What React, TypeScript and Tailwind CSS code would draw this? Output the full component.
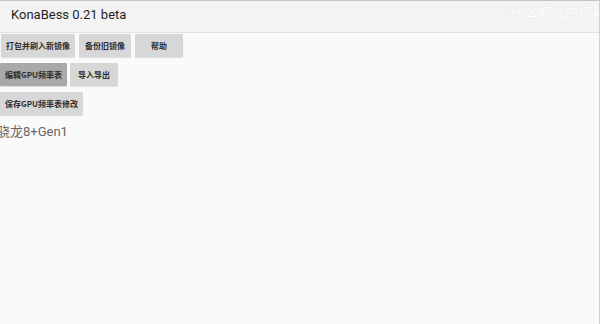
import React from "react";

const font = { fontFamily: '"Roboto", "Noto Sans CJK SC", sans-serif' };

function Btn({ label, dark, className = "" }: { label: string; dark?: boolean; className?: string }) {
  return (
    <button
      className={`h-[23px] min-w-[48px] px-[5px] flex items-center justify-center text-[8px] font-bold text-[#2e2e2e] rounded-[1px] shadow-[0_1px_1px_rgba(0,0,0,0.12)] ${dark ? "bg-[#a9a9a9]" : "bg-[#d7d7d7]"} ${className}`}
      style={{ fontFamily: '"Noto Sans CJK SC", sans-serif' }}
    >
      {label}
    </button>
  );
}

export default function App() {
  return (
    <div className="w-[600px] h-[324px] bg-[#fafafa] relative overflow-hidden border-r border-[#d0d0d0]" style={font}>
      <div className="h-[33px] bg-[#f3f3f3] border-t border-[#c4c4c4] border-b border-b-[#e2e2e2] flex items-center pl-[11px]">
        <span className="text-[13px] text-[#1f1f1f] leading-none mt-[-4px]">KonaBess 0.21 beta</span>
      </div>
      <div
        className="absolute top-[2px] left-[511px] text-[13px] text-white whitespace-nowrap tracking-[0.5px]"
        style={{ fontFamily: '"Noto Sans CJK SC", sans-serif', textShadow: "0 0 1px rgba(0,0,0,0.08)" }}
      >
        什么都做的柯基
      </div>
      <div className="flex flex-col gap-[6px] pt-[1px]">
        <div className="flex gap-[4px] pl-[1px]">
          <Btn label="打包并刷入新镜像" />
          <Btn label="备份旧镜像" className="px-[6px]" />
          <Btn label="帮助" />
        </div>
        <div className="flex gap-[3px]">
          <Btn label="编辑GPU频率表" dark />
          <Btn label="导入导出" />
        </div>
        <div className="flex">
          <Btn label="保存GPU频率表修改" />
        </div>
      </div>
      <div className="ml-[-3px] mt-[10px] text-[13px] text-[#666666] leading-none">
        骁龙8+Gen1
      </div>
    </div>
  );
}
